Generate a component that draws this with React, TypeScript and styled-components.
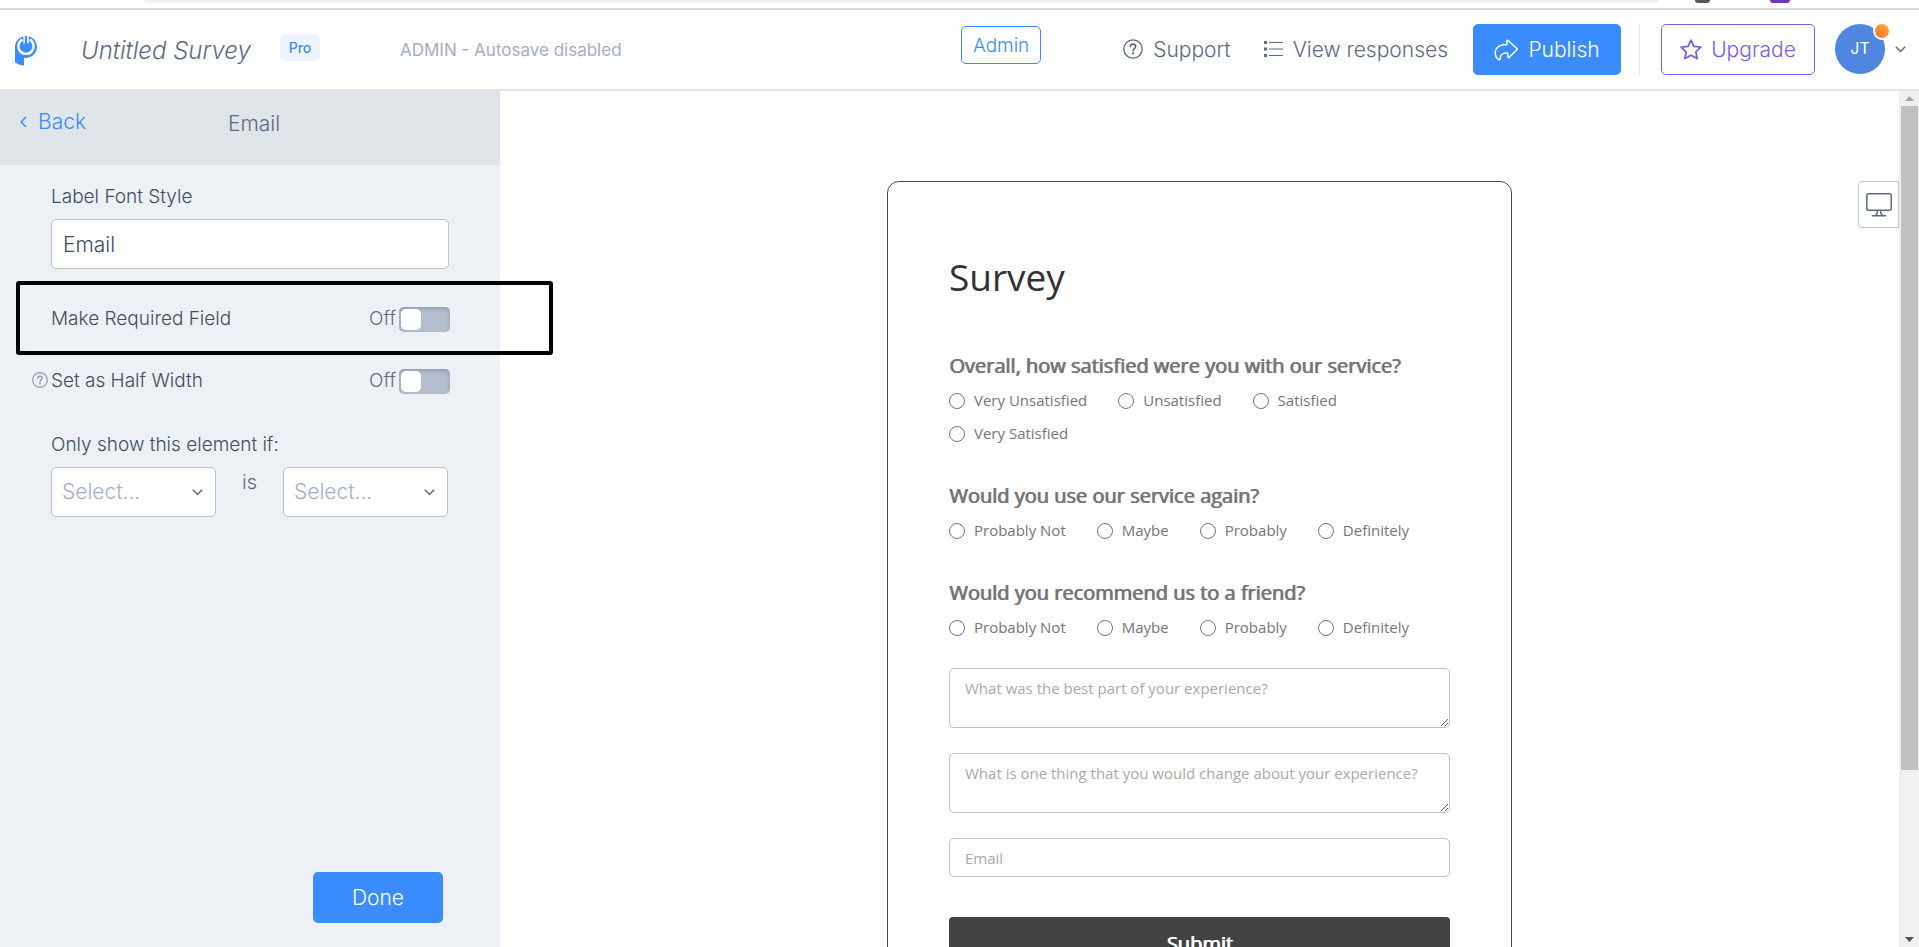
import React from 'react';
import styled, { createGlobalStyle } from 'styled-components';

const ui = '"Inter", "Liberation Sans", sans-serif';
const formFont = '"Open Sans", "Noto Sans", sans-serif';

const GlobalStyle = createGlobalStyle`
  *, *::before, *::after { box-sizing: border-box; }
  body { margin: 0; background: #fff; font-family: ${ui}; font-weight: 300; color: #5c6b82; }
  button, input, select, textarea { font: inherit; color: inherit; margin: 0; }
  h1, h2, p, fieldset { margin: 0; font-weight: inherit; }
  svg { display: block; flex: none; }
`;

const Page = styled.div`
  height: 100vh;
  display: flex;
  flex-direction: column;
  overflow: hidden;
`;

/* Bottom edge of the browser window above the app */
const BrowserEdge = styled.div`
  flex: none;
  height: 10px;
  padding: 0 260px 0 144px;
  border-bottom: 2px solid #d8d8dd;
  position: relative;
`;
const AddressBar = styled.div`
  height: 3px;
  background: #f0f2f1;
  border-radius: 0 0 12px 12px;
`;
const Extension = styled.span<{ $right: number; $width: number; $color: string }>`
  position: absolute;
  top: 0;
  right: ${(p) => p.$right}px;
  width: ${(p) => p.$width}px;
  height: 3px;
  background: ${(p) => p.$color};
  border-radius: 0 0 3px 3px;
`;

const Header = styled.header`
  flex: none;
  height: 81px;
  display: flex;
  align-items: flex-start;
  padding: 14px 13px 0 14px;
  border-bottom: 2px solid #e2e6ec;
  white-space: nowrap;
`;
const HomeLink = styled.a`
  padding: 11px 0;
  margin-right: 43px;
`;
const SurveyTitle = styled.h1`
  width: 199px;
  font-size: 24px;
  line-height: 54px;
  font-style: italic;
`;
const PlanBadge = styled.span`
  width: 40px;
  margin: 10px 80px 0 0;
  border-radius: 5px;
  background: #edf4ff;
  color: #3b8cff;
  font-size: 14px;
  line-height: 27px;
  font-weight: 500;
  text-align: center;
`;
const SaveState = styled.span`
  flex: 1;
  font-size: 17px;
  line-height: 52px;
  color: #a4adc3;
  font-weight: 400;
`;
const AdminButton = styled.button`
  width: 80px;
  height: 38px;
  margin: 2px 82px 0 0;
  padding: 0;
  border: 1px solid #3b8cff;
  border-radius: 5px;
  background: #fff;
  color: #3b8cff;
  font-size: 19px;
`;
const HeaderLink = styled.a`
  display: flex;
  align-items: center;
  gap: 10px;
  height: 50px;
  margin-right: 32px;
  color: inherit;
  font-size: 21px;
  text-decoration: none;
  & + & { margin-right: 25px; }
`;
const HeaderButton = styled.button<{ $width: number; $filled?: boolean }>`
  width: ${(p) => p.$width}px;
  height: 51px;
  display: flex;
  align-items: center;
  justify-content: center;
  gap: 9px;
  padding: 0;
  border: 1px solid ${(p) => (p.$filled ? '#3b8cff' : '#7a5fe0')};
  border-radius: 5px;
  background: ${(p) => (p.$filled ? '#3b8cff' : '#fff')};
  color: ${(p) => (p.$filled ? '#fff' : '#7a5fe0')};
  font-size: 21px;
`;
const Divider = styled.span`
  width: 1px;
  height: 51px;
  margin: 0 21px 0 18px;
  background: #e0e2e6;
`;
const Account = styled.button`
  display: flex;
  align-items: center;
  gap: 10px;
  margin-left: 20px;
  padding: 0;
  border: 0;
  background: none;
`;
const Avatar = styled.span`
  position: relative;
  width: 50px;
  height: 50px;
  border-radius: 50%;
  background: #4f86df;
  color: #fff;
  font-size: 16px;
  line-height: 48px;
  font-weight: 400;
`;
const Notice = styled.span`
  position: absolute;
  top: -2px;
  right: -6px;
  width: 18px;
  height: 18px;
  border: 2px solid #fff;
  border-radius: 50%;
  background: linear-gradient(210deg, #ffb02e, #ff6a3d);
`;

const Workspace = styled.div`
  flex: 1;
  min-height: 0;
  display: flex;
`;

const Sidebar = styled.aside`
  flex: none;
  width: 500px;
  display: flex;
  flex-direction: column;
  background: #edf1f5;
`;
const SidebarHead = styled.div`
  display: grid;
  grid-template-columns: 228px 1fr;
  align-items: start;
  height: 74px;
  padding: 14px 0 0;
  background: #e0e5e9;
`;
const BackLink = styled.a`
  display: flex;
  align-items: center;
  gap: 11px;
  padding-left: 20px;
  color: #3b8cff;
  font-size: 21px;
  line-height: 34px;
  text-decoration: none;
`;
const PanelTitle = styled.h2`
  font-size: 21px;
  line-height: 38px;
`;
const Settings = styled.form`
  flex: 1;
  display: flex;
  flex-direction: column;
  padding: 20px 51px 24px;
  color: #414d61;
  font-size: 19px;
  line-height: 24px;
`;
const TextField = styled.input`
  height: 50px;
  margin-top: 10px;
  padding: 0 11px;
  border: 1px solid #b9c3c9;
  border-radius: 5px;
  background: #fff;
  font-size: 21px;
`;
const ToggleRow = styled.div`
  position: relative;
  display: flex;
  align-items: center;
  height: 24px;
  margin: 38px -1px 0 0;
  color: #5c6b82;
`;
const ToggleLabel = styled.label`
  flex: 1;
  color: #414d61;
`;
const HelpMark = styled.span`
  position: absolute;
  left: -19px;
  top: 3px;
  color: #8b94a3;
`;
const Highlight = styled.span`
  position: absolute;
  top: -26px;
  left: -35px;
  right: -103px;
  height: 74px;
  border: 4px solid #000;
  border-radius: 3px;
  pointer-events: none;
`;
const Switch = styled.input`
  appearance: none;
  position: relative;
  width: 51px;
  height: 25px;
  margin-left: 3px;
  border-radius: 5px;
  background: #b5bece;
  box-shadow: inset 0 2px 4px #919bae;
  &::before {
    content: '';
    position: absolute;
    top: 2px;
    left: 2px;
    width: 20px;
    height: 21px;
    border-radius: 5px;
    background: #fff;
  }
  &:checked { background: #3b8cff; box-shadow: none; }
  &:checked::before { left: 29px; }
`;
const ConditionLabel = styled.p`
  margin-top: 40px;
`;
const Condition = styled.div`
  display: flex;
  justify-content: space-between;
  margin: 10px 1px 0 0;
  color: #5c6b82;
`;
const SelectBox = styled.div`
  display: grid;
  width: 165px;
  align-items: center;
  & > * { grid-area: 1 / 1; }
  & > svg { justify-self: end; margin-right: 13px; pointer-events: none; }
`;
const Select = styled.select`
  appearance: none;
  width: 100%;
  height: 50px;
  padding: 0 10px;
  border: 1px solid #b9c3c9;
  border-radius: 5px;
  background: #fff;
  color: #a4afc6;
  font-size: 21px;
`;
const Is = styled.span`
  padding-top: 3px;
  font-size: 20px;
`;
const DoneButton = styled.button`
  align-self: flex-end;
  width: 130px;
  height: 51px;
  margin: auto 6px 0 0;
  border: 0;
  border-radius: 5px;
  background: #3b8cff;
  color: #fff;
  font-size: 21px;
`;

const Canvas = styled.main`
  position: relative;
  flex: 1;
  min-width: 0;
  overflow: hidden;
  padding-top: 90px;
`;
const DeviceButton = styled.button`
  position: absolute;
  top: 90px;
  right: 0;
  display: grid;
  place-items: center;
  width: 41px;
  height: 47px;
  padding: 0;
  border: 1px solid #b9c8cc;
  border-radius: 4px 0 0 4px;
  background: #fff;
`;
const SurveyCard = styled.form`
  width: 625px;
  max-width: 100%;
  margin: 0 auto;
  padding: 70px 61px;
  border: 1px solid #4a4a4a;
  border-radius: 12px;
  color: #767676;
  font-family: ${formFont};
  font-weight: 400;
  font-size: 15px;
`;
const SurveyHeading = styled.h2`
  margin-bottom: 50px;
  color: #333;
  font-size: 37px;
  line-height: 50px;
`;
const Question = styled.fieldset`
  min-width: 0;
  padding: 0;
  border: 0;
  margin-bottom: 28px;
  &:last-of-type { margin-bottom: 20px; }
`;
/* The regular cut, thickened sideways, so that headings keep the regular letter widths */
const Prompt = styled.legend`
  padding: 0;
  font-size: 20px;
  line-height: 28px;
  text-shadow: 1px 0 0 currentColor;
`;
const Options = styled.div`
  display: flex;
  flex-wrap: wrap;
  column-gap: 31px;
  padding-top: 8px;
`;
const Option = styled.label`
  display: flex;
  align-items: center;
  gap: 9px;
  height: 33px;
  line-height: 20px;
  padding-bottom: 10px;
`;
const Radio = styled.input`
  appearance: none;
  width: 16px;
  height: 16px;
  margin-top: 3px;
  border: 1px solid #767676;
  border-radius: 50%;
  background: #fff;
  &:checked { border: 5px solid #3b8cff; }
`;
const LongAnswer = styled.textarea`
  display: block;
  width: 100%;
  height: 60px;
  margin-bottom: 25px;
  padding: 9px 15px;
  border: 1px solid #b9c3c9;
  border-radius: 5px;
  line-height: 20px;
  resize: vertical;
  &::placeholder { color: #a9a9a9; }
`;
const ShortAnswer = styled.input`
  display: block;
  width: 100%;
  height: 39px;
  margin-bottom: 40px;
  padding: 0 15px;
  border: 1px solid #b9c3c9;
  border-radius: 5px;
  &::placeholder { color: #a9a9a9; }
`;
const SubmitButton = styled.button`
  display: block;
  width: 100%;
  height: 52px;
  border: 0;
  border-radius: 4px;
  background: #434343;
  color: #fff;
  font-size: 20px;
  text-shadow: 1px 0 0 currentColor;
`;

const ScrollTrack = styled.div`
  flex: none;
  width: 20px;
  display: grid;
  grid-template-rows: 15px 82fr 20fr 15px;
  justify-items: center;
  align-items: center;
  background: #f0f0f0;
`;
const ScrollThumb = styled.div`
  grid-row: 2;
  width: 17px;
  height: 100%;
  background: #c1c1c1;
`;
const ScrollArrow = styled.svg<{ $down?: boolean }>`
  grid-row: ${(p) => (p.$down ? 4 : 1)};
`;

const Logo = () => (
  <svg width="24" height="31" viewBox="0 0 24 31" aria-hidden="true">
    <path d="M1 12A11 11 0 1 1 10 22.8V30.5Q5 30 1 27.5Z" fill="#3b8cff" />
    <path d="M8.4 4.6A7.6 7.6 0 1 0 15.6 4.6" fill="none" stroke="#fff" strokeWidth="2.4" />
    <path d="M10.1 0V8.4M13.9 0V8.4" stroke="#fff" strokeWidth="1.5" />
  </svg>
);

const Help = ({ size }: { size: number }) => (
  <svg width={size} height={size} viewBox="0 0 20 20" fill="none" stroke="currentColor" strokeWidth="1.3" strokeLinecap="round" aria-hidden="true">
    <circle cx="10" cy="10" r="9.2" />
    <path d="M7.3 7.8C7.3 6 8.5 5.1 10 5.1S12.7 6 12.7 7.6C12.7 9.6 10 9.6 10 11.8" strokeWidth="1.6" />
    <circle cx="10" cy="14.4" r=".5" fill="currentColor" />
  </svg>
);

const ListIcon = () => (
  <svg width="20" height="18" viewBox="0 0 20 18" aria-hidden="true">
    <path d="M1 1h3v3H1zM1 7.5h3v3H1zM1 14h3v3H1z" fill="currentColor" />
    <path d="M6 2.5h14M6 9h14M6 15.5h14" stroke="currentColor" strokeWidth="1.2" />
  </svg>
);

const ShareIcon = () => (
  <svg width="25" height="22" viewBox="0 0 25 22" fill="none" stroke="currentColor" strokeWidth="1.5" strokeLinejoin="round" aria-hidden="true">
    <path d="M14 1.5L23.5 10L15 18.5C14.2 19 13.8 18.6 13.8 18V14.2C9.5 13.8 6.5 14.8 6.2 18.5C6.3 20.5 5.8 21.3 4.6 20.6C2.2 19 1.2 16.5 1.2 13.8C1.5 8.5 6 5.4 12.8 5.4V2.2C12.8 1.2 13.4 1 14 1.5Z" />
  </svg>
);

const StarIcon = () => (
  <svg width="22" height="21" viewBox="0 0 22 21" fill="none" stroke="currentColor" strokeWidth="1.8" strokeLinejoin="round" aria-hidden="true">
    <path d="M11 1.2L13.9 7.3L20.8 8.2L15.9 12.8L17.1 19.5L11 16.2L4.9 19.5L6.1 12.8L1.2 8.2L8.1 7.3Z" />
  </svg>
);

const Chevron = ({ left }: { left?: boolean }) =>
  left ? (
    <svg width="7" height="12" viewBox="0 0 7 12" fill="none" stroke="currentColor" strokeWidth="1.5" aria-hidden="true">
      <path d="M6 1L1.2 6L6 11" />
    </svg>
  ) : (
    <svg width="11" height="7" viewBox="0 0 11 7" fill="none" stroke="currentColor" strokeWidth="1.5" aria-hidden="true">
      <path d="M.8 .8L5.5 5.5L10.2 .8" />
    </svg>
  );

const Monitor = () => (
  <svg width="26" height="24" viewBox="0 0 26 24" fill="none" stroke="currentColor" strokeWidth="1.5" strokeLinecap="round" aria-hidden="true">
    <rect x=".8" y=".8" width="24.4" height="16.4" rx="1.5" />
    <path d="M11.6 17.4C11.4 20 11 21.4 9.6 22.6M14.4 17.4C14.6 20 15 21.4 16.4 22.6M6.5 22.7H19.5" />
  </svg>
);

function ConditionSelect({ label }: { label: string }) {
  return (
    <SelectBox>
      <Select aria-label={label} defaultValue="">
        <option value="">Select...</option>
      </Select>
      <Chevron />
    </SelectBox>
  );
}

const again = ['Probably Not', 'Maybe', 'Probably', 'Definitely'];
const questions = [
  { id: 'satisfied', prompt: 'Overall, how satisfied were you with our service?', options: ['Very Unsatisfied', 'Unsatisfied', 'Satisfied', 'Very Satisfied'] },
  { id: 'again', prompt: 'Would you use our service again?', options: again },
  { id: 'recommend', prompt: 'Would you recommend us to a friend?', options: again },
];

export default function App() {
  return (
    <Page>
      <GlobalStyle />
      <BrowserEdge aria-hidden="true">
        <AddressBar />
        <Extension $right={209} $width={15} $color="#555" />
        <Extension $right={129} $width={20} $color="#6f35bf" />
      </BrowserEdge>
      <Header>
        <HomeLink href="#" aria-label="Home"><Logo /></HomeLink>
        <SurveyTitle>Untitled Survey</SurveyTitle>
        <PlanBadge>Pro</PlanBadge>
        <SaveState>ADMIN - Autosave disabled</SaveState>
        <AdminButton type="button">Admin</AdminButton>
        <HeaderLink href="#"><Help size={20} />Support</HeaderLink>
        <HeaderLink href="#"><ListIcon />View responses</HeaderLink>
        <HeaderButton type="button" $width={148} $filled><ShareIcon />Publish</HeaderButton>
        <Divider />
        <HeaderButton type="button" $width={154}><StarIcon />Upgrade</HeaderButton>
        <Account type="button">
          <Avatar>JT<Notice /></Avatar>
          <Chevron />
        </Account>
      </Header>
      <Workspace>
        <Sidebar>
          <SidebarHead>
            <BackLink href="#"><Chevron left />Back</BackLink>
            <PanelTitle>Email</PanelTitle>
          </SidebarHead>
          <Settings>
            <label htmlFor="label-style">Label Font Style</label>
            <TextField id="label-style" type="text" defaultValue="Email" />
            <ToggleRow>
              <ToggleLabel htmlFor="required">Make Required Field</ToggleLabel>
              Off
              <Switch id="required" type="checkbox" role="switch" />
              <Highlight />
            </ToggleRow>
            <ToggleRow>
              <HelpMark><Help size={16} /></HelpMark>
              <ToggleLabel htmlFor="half">Set as Half Width</ToggleLabel>
              Off
              <Switch id="half" type="checkbox" role="switch" />
            </ToggleRow>
            <ConditionLabel>Only show this element if:</ConditionLabel>
            <Condition>
              <ConditionSelect label="Element" />
              <Is>is</Is>
              <ConditionSelect label="Value" />
            </Condition>
            <DoneButton type="button">Done</DoneButton>
          </Settings>
        </Sidebar>
        <Canvas>
          <DeviceButton type="button" aria-label="Desktop preview"><Monitor /></DeviceButton>
          <SurveyCard>
            <SurveyHeading>Survey</SurveyHeading>
            {questions.map((q) => (
              <Question key={q.id}>
                <Prompt>{q.prompt}</Prompt>
                <Options>
                  {q.options.map((o) => (
                    <Option key={o}>
                      <Radio type="radio" name={q.id} value={o} />
                      {o}
                    </Option>
                  ))}
                </Options>
              </Question>
            ))}
            <LongAnswer aria-label="Best part" placeholder="What was the best part of your experience?" />
            <LongAnswer aria-label="One change" placeholder="What is one thing that you would change about your experience?" />
            <ShortAnswer type="email" aria-label="Email" placeholder="Email" />
            <SubmitButton type="button">Submit</SubmitButton>
          </SurveyCard>
        </Canvas>
        <ScrollTrack aria-hidden="true">
          <ScrollArrow width="9" height="5" viewBox="0 0 9 5"><path d="M0 5L4.5 0L9 5Z" fill="#a3a3a3" /></ScrollArrow>
          <ScrollThumb />
          <ScrollArrow $down width="9" height="5" viewBox="0 0 9 5"><path d="M0 0L4.5 5L9 0Z" fill="#505050" /></ScrollArrow>
        </ScrollTrack>
      </Workspace>
    </Page>
  );
}
